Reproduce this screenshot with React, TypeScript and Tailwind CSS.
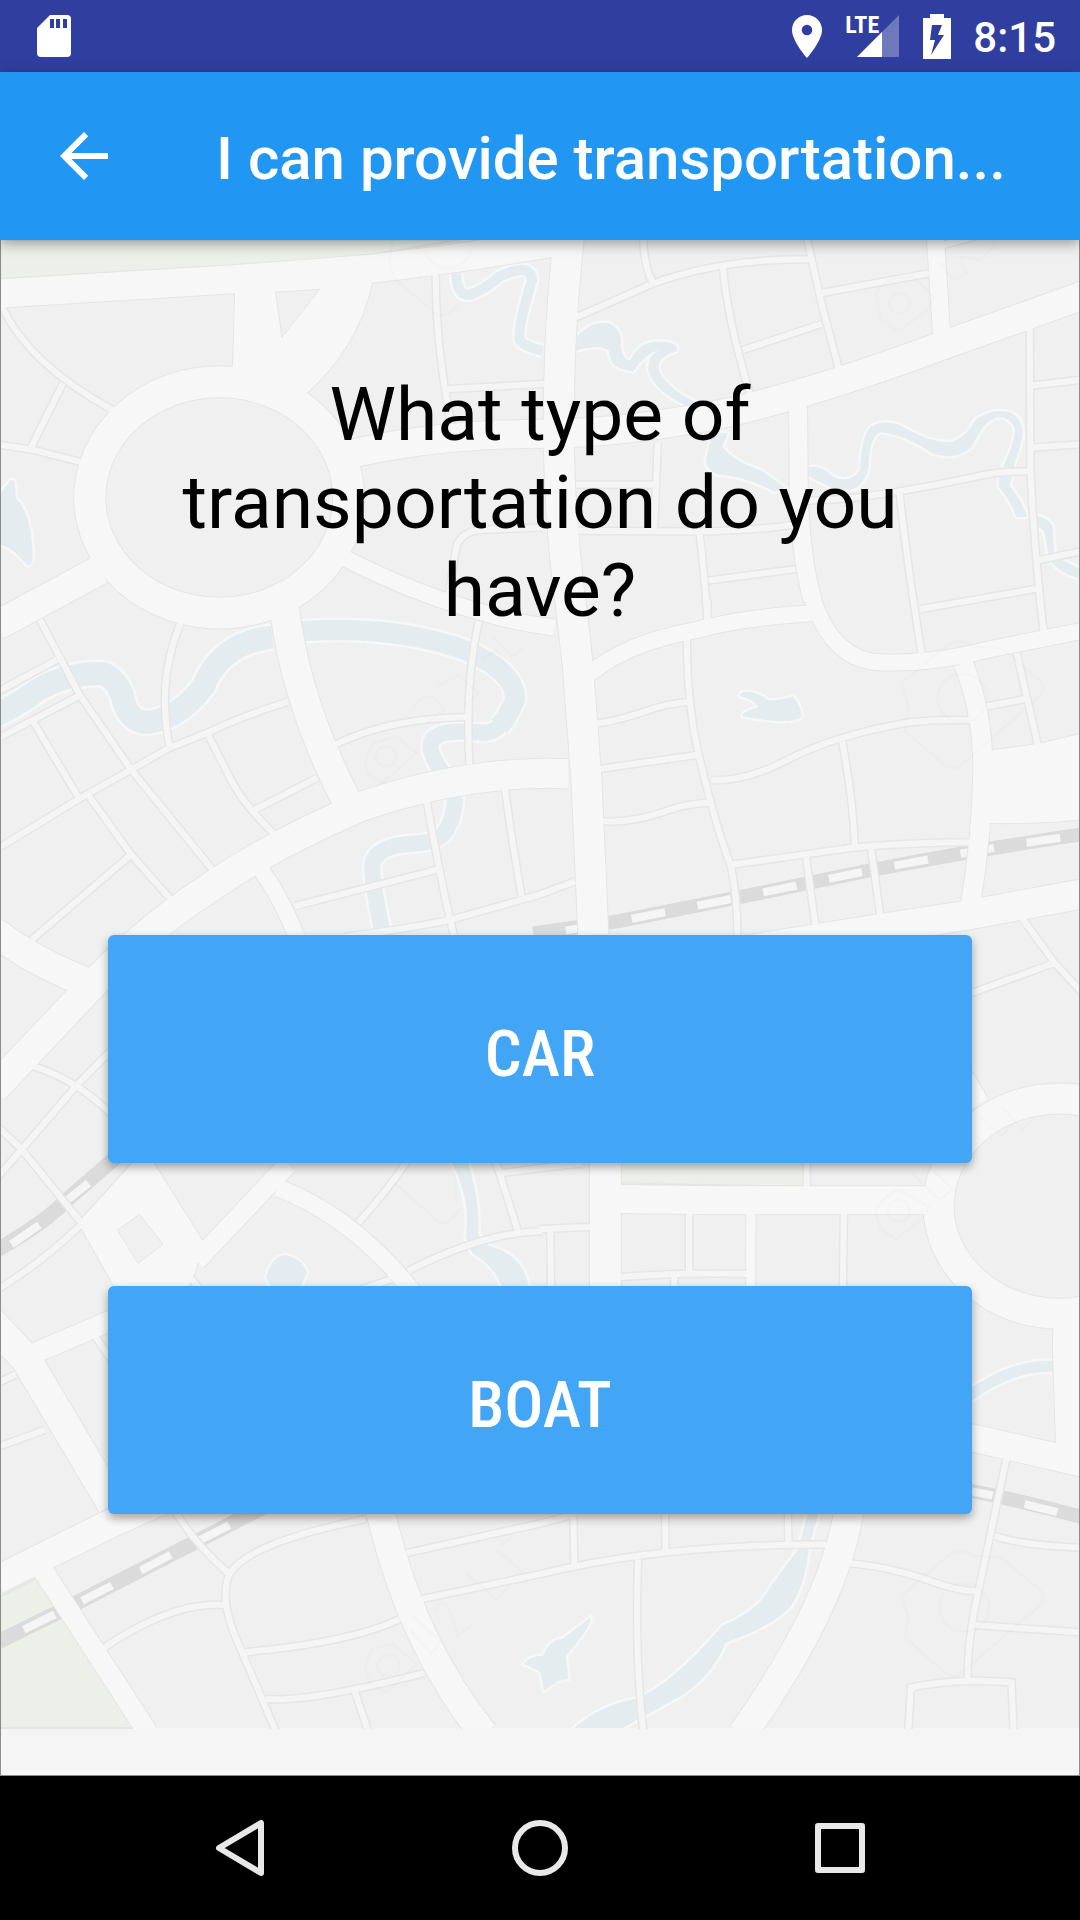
import React from "react";

type Road = [d: string, width: number];

interface District {
  x: number;
  y: number;
  parks?: string[];
  water?: string[];
  rivers?: Road[];
  rails?: { bed: string; ties: string; width: number; dash?: string }[];
  minor?: string[];
  roads?: Road[];
  plazas?: string[];
  islands?: string[];
  marks?: string[];
}

const STREET = 7;

const districts: District[] = [
  {
    x: 0,
    y: 230,
    parks: ["M0 30L0 147L700 105L1070 75L1330 30Z"],
    water: ["M0 790L30 752Q40 745 42 765L45 805Q92 850 94 990Q90 1010 75 1003Q40 955 0 945Z"],
    rivers: [["M1325 130Q1325 195 1360 195Q1400 185 1450 140Q1540 95 1545 150Q1500 300 1510 330Q1520 350 1575 362", 10]],
    minor: [
      "M5 230Q80 400 325 540",
      "M182 460L88 655",
      "M0 645L95 660L235 697",
      "M1265 135Q1265 350 1310 580",
      "M1295 478L1575 462",
      "M1300 1110L1325 950Q1340 905 1400 900L1575 893",
    ],
    roads: [
      ["M-10 191L680 148L1070 117Q1350 85 1620 35", 29],
      ["M1012 803A376 347 0 1 1 260 803A376 347 0 1 1 1012 803Z", 32],
      ["M990 680Q1250 612 1575 612", 29],
      ["M290 1020L-10 1187", 30],
    ],
    plazas: ["M682 150L682 200Q680 310 675 420L800 480L890 490Q1040 350 1080 158L1070 110Z"],
    islands: ["M800 187L928 178L818 322Z"],
    marks: ["M1140 30Q1120 120 1150 150L1270 255Q1300 260 1330 225", "M1230 60Q1260 115 1300 115Q1350 110 1370 60"],
  },
  {
    x: 540,
    y: 230,
    water: [
      "M105 322Q150 270 200 280Q240 300 235 345Q240 390 262 392Q290 335 340 335Q410 335 395 365Q340 380 345 420Q370 480 470 525L420 525Q330 480 315 420Q315 370 350 360Q310 365 270 425L230 415Q200 400 200 362Q170 340 105 362Z",
      "M500 610L545 610L530 650Q560 695 640 720L720 780L680 785Q600 740 520 735Q480 720 482 690Z",
      "M780 712Q820 705 850 740Q900 765 930 720Q935 600 970 585Q1020 565 1070 600Q1150 645 1200 635Q1240 620 1265 570Q1320 530 1370 550Q1410 570 1400 630L1375 715L1345 710Q1380 640 1380 600Q1370 560 1330 562Q1290 570 1255 650Q1210 695 1140 670Q1050 610 990 607Q955 620 955 710Q940 785 880 782Q840 775 780 737Z",
      "M1335 740L1370 740L1365 770Q1400 810 1415 860L1385 862Q1360 800 1332 770Z",
      "M1435 855Q1495 870 1490 905L1495 980L1580 1022L1580 1050Q1500 1030 1480 985L1465 905L1435 880Z",
    ],
    minor: [
      "M105 262L330 160Q530 85 785 88",
      "M300 20Q300 100 328 160",
      "M532 110Q540 250 612 500",
      "M775 20L820 230L868 415",
      "M590 360L818 282",
      "M815 190L1130 130",
      "M1170 45L1270 18",
      "M1423 290L1425 720Q1435 950 1463 1205",
      "M1430 467L1580 449",
      "M1430 653L1580 643",
      "M1440 993L1580 963",
      "M775 812Q950 812 1290 735Q1350 723 1422 725",
      "M1045 790Q1060 950 1108 1270",
      "M1105 1138L1442 1077",
      "M342 640L332 895",
      "M105 765L335 765",
      "M105 903L460 905Q650 900 735 885",
      "M463 905Q480 1050 487 1180",
      "M490 1052L742 1018",
      "M0 462L30 461",
    ],
    roads: [
      ["M85 10Q50 330 55 660Q60 900 88 1110L110 1310L135 1650L155 2115", 31],
      ["M-10 612Q250 612 560 545Q820 480 1160 350L1590 192", 29],
      ["M1148 10L1168 330", 18],
      ["M750 530L752 800Q760 1000 792 1110", 19],
    ],
    marks: ["M975 190Q985 170 1030 145L1085 140L1145 205L1125 240L1040 305L990 270Z", "M1015 220A30 30 0 1 0 1075 220A30 30 0 1 0 1015 220", "M1165 100L1200 150L1240 130L1220 80L1280 90L1325 45"],
  },
  {
    x: 0,
    y: 600,
    rivers: [
      ["M-10 345Q60 310 110 270Q200 218 300 222Q335 235 355 290Q370 370 430 368Q520 355 590 260Q640 130 790 112", 23],
      ["M870 95Q1150 75 1360 155Q1500 220 1495 300Q1475 350 1450 380", 20],
      ["M1450 380Q1425 405 1390 398Q1250 385 1250 440Q1250 470 1285 520", 16],
      ["M1320 570Q1325 650 1290 700Q1270 728 1200 732Q1085 740 1080 800Q1080 850 1110 995", 16],
    ],
    minor: [
      "M115 60L230 285L380 510L620 815",
      "M0 272L165 180",
      "M0 412L235 285",
      "M95 365L225 590",
      "M258 590L380 765L500 905",
      "M0 742L230 597L380 510L490 445L600 400Q700 350 835 306",
      "M525 65Q480 180 478 290Q478 380 492 440",
      "M603 405L670 540Q710 620 798 705",
      "M740 630L920 535",
      "M970 436Q1130 355 1355 352",
      "M1390 65Q1350 250 1363 495",
      "M380 765L92 1020",
      "M1238 600Q1290 900 1320 1015",
      "M855 920L1270 810",
      "M1465 560Q1490 750 1515 890",
      "M1000 1012Q1200 985 1310 960L1568 885L1670 845",
    ],
    roads: [
      ["M820 -20Q850 300 1015 620", 30],
      ["M1000 -125Q1200 -20 1390 35Q1480 65 1610 84", 17],
      ["M1650 522Q1350 512 1050 620Q780 740 600 870Q420 990 245 1180L-20 1470", 30],
      ["M-20 995Q100 1090 260 1152", 30],
      ["M760 815Q820 900 868 1030", 17],
    ],
    marks: ["M1060 480L1085 430L1150 410L1210 460L1110 550L1065 520Z", "M1090 470A30 30 0 1 0 1150 470A30 30 0 1 0 1090 470", "M1200 330Q1210 290 1260 290L1290 330L1240 370", "M1270 260L1330 225L1390 280L1350 320", "M1400 180L1440 150L1480 215", "M1430 110L1490 170L1520 140"],
  },
  {
    x: 540,
    y: 600,
    water: ["M580 288Q580 275 610 277Q635 280 660 300Q685 307 735 290Q765 330 757 355Q720 375 590 350Q580 340 635 322Q620 300 580 288Z"],
    rails: [
      {
        bed: "M-20 1002L230 965L580 893L960 812Q1300 745 1590 702",
        ties: "M75 993L230 965L580 893L960 812Q1300 745 1520 713",
        width: 14,
        dash: "34 33",
      },
    ],
    minor: [
      "M427 115Q425 300 460 460Q510 680 555 800Q575 900 573 1010",
      "M158 372Q200 370 300 337Q380 308 437 308",
      "M172 508L462 465",
      "M182 665Q260 670 350 640Q420 612 502 608",
      "M498 542Q600 545 720 480Q850 410 1050 372Q1130 358 1255 362",
      "M878 425Q910 600 915 745",
      "M560 795L900 745Q1050 730 1250 728",
      "M772 765L800 975",
      "M962 745L988 945",
      "M1298 320L1415 297",
      "M1385 160L1447 438",
      "M487 0L487 70",
      "M1400 955L1495 1090L1590 1195",
      "M1495 1090L1250 1182",
      "M1463 80L1465 100",
    ],
    roads: [
      ["M145 222Q250 130 450 92Q600 50 810 40", 17],
      ["M790 -10Q850 190 1000 188Q1150 192 1300 150L1590 90", 17],
      ["M1230 190Q1285 330 1287 500Q1285 700 1250 920", 20],
      ["M540 1062Q900 1000 1240 947L1590 880", 30],
    ],
    plazas: ["M1270 480L1315 452L1450 432L1590 398L1590 658Q1450 675 1308 670L1270 670Z"],
    marks: ["M1050 250L1180 140Q1215 110 1260 140L1340 145L1450 240Q1475 270 1440 300L1220 500Q1200 515 1170 490L1060 395L1070 320Z", "M1155 295A72 72 0 1 0 1300 295A72 72 0 1 0 1155 295"],
  },
  {
    x: 0,
    y: 960,
    water: [
      "M772 955Q790 888 830 888Q880 900 890 940L870 990L790 990Z",
      "M1305 595L1355 595Q1395 720 1388 825L1420 860Q1530 890 1535 995L1458 995Q1450 930 1370 880L1352 830Q1370 720 1305 595Z",
    ],
    rails: [{ bed: "M-10 872Q130 790 200 715L340 590", ties: "M32 855L113 797M197 720L256 671", width: 15 }],
    minor: [
      "M95 320Q220 360 320 462",
      "M-10 655L62 570L220 380L320 275",
      "M-5 505L62 570L235 790",
      "M-5 988Q120 910 235 795L400 605",
      "M1040 790Q1120 700 1185 600",
      "M1185 935Q1400 820 1575 815",
      "M1438 600L1505 820",
      "M1450 642L1575 625L1690 612",
      "M1135 960L1050 990",
      "M545 945L580 990",
      "M275 1130L325 1205",
      "M-5 1270L45 1245",
    ],
    roads: [
      ["M570 905L835 615", 20],
      ["M805 685Q1000 760 1165 955L1200 1000", 18],
      ["M80 1190L330 1080", 21],
    ],
    plazas: ["M392 605L442 605L590 848L565 942L540 990L335 990L235 805L235 780Z"],
    islands: ["M340 812L405 765L473 855L400 912Z"],
    marks: ["M1145 670L1270 785Q1290 800 1310 780L1340 745", "M1320 620L1325 730"],
  },
  {
    x: 540,
    y: 960,
    parks: ["M235 595L235 672L765 682L765 595Z"],
    rivers: [["M1240 1315Q1380 1210 1500 1222", 11]],
    minor: [
      "M775 600L775 700",
      "M433 755L433 945",
      "M883 755L880 990",
      "M235 953Q450 938 618 945",
      "M390 950L390 990",
      "M-5 810L150 802",
      "M30 812L32 990",
      "M612 945L612 990",
    ],
    roads: [
      ["M180 718Q500 725 1160 722", 29],
      ["M613 755L612 990", 10],
      ["M190 600L190 990", 32],
      ["M1862 740A352 323 0 1 1 1158 740A352 323 0 1 1 1862 740Z", 31],
      ["M1265 440L1190 310", 30],
      ["M1570 430L1620 370", 26],
    ],
    plazas: ["M1492 1080L1490 1160L1500 1480L1600 1500L1600 1080Z"],
    marks: ["M975 760Q985 720 1040 690L1130 740L1120 770L1035 840L990 810Z", "M1010 755A32 32 0 1 0 1074 755A32 32 0 1 0 1010 755", "M1080 640L1160 720L1200 690L1130 620", "M1280 470L1340 530L1380 490", "M1340 440L1400 510L1440 470"],
  },
  {
    x: 0,
    y: 1360,
    parks: ["M0 712L105 658L400 1107L0 1107Z"],
    water: ["M1520 915Q1540 890 1577 890Q1600 840 1633 840L1715 775Q1725 790 1643 890L1650 960L1620 965L1580 995L1570 940Q1540 920 1520 915Z"],
    rails: [
      {
        bed: "M-10 850L190 748L800 425",
        ties: "M68 812L158 766M237 725L325 679M408 634L495 587M580 543L665 498",
        width: 15,
      },
    ],
    minor: [
      "M-5 262L130 212",
      "M510 460Q570 560 665 645",
      "M1060 480Q720 550 665 645Q635 720 690 850L802 1120",
      "M292 872Q500 725 652 738",
      "M705 880Q1020 850 1160 780",
      "M770 1020Q900 1030 1230 942",
      "M1030 998L1070 1120",
      "M1180 582L1568 493L1670 465",
      "M1225 720L1568 645Q1920 555 2400 556",
    ],
    roads: [
      ["M-30 -115L75 0L325 435", 31],
      ["M-10 662L330 488L500 410", 29],
      ["M115 620L428 1120", 21],
      ["M1100 440Q1190 850 1405 1125", 29],
    ],
    marks: ["M1060 920L1080 870L1140 855L1210 915L1120 1000L1070 970Z", "M1095 920A32 32 0 1 0 1159 920A32 32 0 1 0 1095 920", "M1190 810L1250 885L1280 850L1200 770", "M1270 760Q1260 720 1300 740L1330 830L1380 790", "M1350 640L1440 720L1480 680", "M1440 570L1520 640M1450 560L1490 530"],
  },
  {
    x: 540,
    y: 1360,
    water: [
      "M780 455L812 455L782 560Q770 680 730 740Q680 800 540 850Q500 950 410 1010L240 1107L100 1107Q170 1040 280 1018Q380 980 530 800Q640 750 665 690L750 570Z",
    ],
    rails: [{ bed: "M1240 392Q1400 425 1590 478", ties: "M1255 397L1315 409M1408 435L1503 459", width: 14 }],
    minor: [
      "M97 470L100 622",
      "M363 455L365 582",
      "M720 455L722 556",
      "M285 600Q275 900 300 1115",
      "M1070 1115L1078 985Q1220 955 1370 970L1376 1115",
      "M1355 300L1275 690Q1240 850 1243 962",
      "M900 612Q1000 620 1120 660Q1220 700 1275 695",
      "M1320 530Q1400 560 1590 566",
      "M1262 798L1590 821",
    ],
    roads: [
      ["M900 440Q860 730 588 1125", 30],
      ["M1230 230L1590 315", 28],
    ],
    marks: ["M1050 710L1180 595Q1215 560 1260 590L1340 595L1455 695Q1475 720 1440 750L1220 945Q1200 960 1170 935L1060 835L1070 770Z", "M1160 745A72 72 0 1 0 1305 745A72 72 0 1 0 1160 745"],
  },
];

function Layer({ children }: { children: (district: District) => React.ReactNode }) {
  return (
    <>
      {districts.map((district) => (
        <g
          key={`${district.x}-${district.y}`}
          transform={`translate(${district.x} ${district.y}) scale(0.34439 0.33333)`}
        >
          {children(district)}
        </g>
      ))}
    </>
  );
}

function Line({ d, color, width, dash }: { d: string; color: string; width: number; dash?: string }) {
  return (
    <path d={d} fill="none" stroke={color} strokeWidth={width} strokeDasharray={dash} vectorEffect="non-scaling-stroke" />
  );
}

function Area({ d, color, edge, width = 2 }: { d: string; color: string; edge: string; width?: number }) {
  return <path d={d} fill={color} stroke={edge} strokeWidth={width} strokeLinejoin="round" vectorEffect="non-scaling-stroke" />;
}

function CityMap() {
  return (
    <svg
      aria-hidden="true"
      className="absolute inset-0 h-full w-full"
      viewBox="0 240 1080 1536"
      preserveAspectRatio="xMidYMin slice"
    >
      <rect x="0" y="240" width="1080" height="1489" fill="#f0f0f0" />
      <Layer>
        {(t) => (
          <>
            {t.parks?.map((d) => <Area key={d} d={d} color="#edf0e9" edge="#e4e6e0" />)}
            {t.rivers?.map(([d, w]) => <Line key={d} d={d} color="#f6f7f7" width={w + 5} />)}
            {t.water?.map((d) => <Area key={d} d={d} color="#e5ecef" edge="#f6f7f7" width={5} />)}
          </>
        )}
      </Layer>
      <Layer>
        {(t) => (
          <>
            {t.rivers?.map(([d, w]) => <Line key={d} d={d} color="#e5ecef" width={w} />)}
            {t.water?.map((d) => <path key={d} d={d} fill="#e5ecef" />)}
            {t.rails?.map(({ bed, width }) => <Line key={bed} d={bed} color="#dbdbdb" width={width} />)}
            {t.rails?.map(({ ties, dash }) => <Line key={ties} d={ties} color="#f5f5f5" width={8} dash={dash} />)}
          </>
        )}
      </Layer>
      <Layer>
        {(t) => (
          <>
            {t.minor?.map((d) => <Line key={d} d={d} color="#e6e6e6" width={STREET + 2} />)}
            {t.roads?.map(([d, w]) => <Line key={d} d={d} color="#e5e5e5" width={w + 1} />)}
            {t.plazas?.map((d) => <Area key={d} d={d} color="#e5e5e5" edge="#e5e5e5" />)}
          </>
        )}
      </Layer>
      <Layer>
        {(t) => (
          <>
            {t.minor?.map((d) => <Line key={d} d={d} color="#f5f5f5" width={STREET - 1} />)}
          </>
        )}
      </Layer>
      <Layer>
        {(t) => (
          <>
            {t.roads?.map(([d, w]) => <Line key={d} d={d} color="#f7f7f7" width={w - 1} />)}
            {t.plazas?.map((d) => <path key={d} d={d} fill="#f7f7f7" />)}
          </>
        )}
      </Layer>
      <Layer>
        {(t) => (
          <>
            {t.islands?.map((d) => <Area key={d} d={d} color="#f0f0f0" edge="#e6e6e6" width={1} />)}
            {t.marks?.map((d) => <Line key={d} d={d} color="#00000003" width={3} />)}
          </>
        )}
      </Layer>
      <rect x="0" y="1730" width="1080" height="400" fill="#f5f5f5" />
    </svg>
  );
}

function StatusBar() {
  return (
    <div className="flex h-[72px] items-center bg-[#303f9f] pl-9 pr-6 text-white">
      <svg className="h-11 w-9" viewBox="0 0 36 44" fill="currentColor" aria-label="SD card" role="img">
        <path
          fillRule="evenodd"
          d="M14 1h17a4 4 0 0 1 4 4v34a4 4 0 0 1-4 4H5a4 4 0 0 1-4-4V14zM14 5v9h4V5zM20 5v9h4V5zM27 5v9h4V5z"
        />
      </svg>
      <div className="ml-auto flex items-center">
        <svg className="h-11 w-8" viewBox="0 0 32 44" fill="currentColor" aria-label="Location" role="img">
          <path
            fillRule="evenodd"
            d="M16 1C7.700 1 1 7.700 1 16c0 11.200 15 28 15 28s15-16.800 15-28C31 7.700 24.300 1 16 1zm0 20.300a5.300 5.300 0 1 1 0-10.600 5.300 5.300 0 0 1 0 10.600z"
          />
        </svg>
        <div className="relative ml-[22px] h-11 w-14">
          <svg className="h-11 w-14" viewBox="0 0 56 44" fill="currentColor" aria-hidden="true">
            <path d="M54 1v42H12z" opacity="0.3" />
            <path d="M37 18v25H12z" />
          </svg>
          <span className="absolute left-0 top-0 font-['Roboto_Condensed','Roboto'] text-[24px] font-bold leading-[22px]">
            LTE
          </span>
        </div>
        <svg className="ml-[22px] h-[46px] w-7" viewBox="0 0 28 46" fill="currentColor" aria-label="Battery charging" role="img">
          <path fillRule="evenodd" d="M7 1h14v4h7v41H0V5h7zM9 12L7 27h5L8 42 21 22h-6l4-10z" />
        </svg>
        <time className="ml-[22px] pt-1 text-[42px] font-medium leading-[48px]">8:15</time>
      </div>
    </div>
  );
}

function AppBar() {
  return (
    <header className="relative z-10 flex h-[168px] items-center bg-[#2196f3] pl-12 text-white shadow-[0_4px_12px_rgba(0,0,0,0.35)]">
      <button type="button" aria-label="Back" className="size-[72px]">
        <svg className="size-[72px]" viewBox="0 0 24 24" fill="currentColor" aria-hidden="true">
          <path d="M20 11H7.830l5.590-5.590L12 4l-8 8 8 8 1.410-1.410L7.830 13H20v-2z" />
        </svg>
      </button>
      <h1 className="ml-24 whitespace-nowrap pt-1.5 text-[60px] font-medium leading-[72px]">I can provide transportation...</h1>
    </header>
  );
}

function Choice({ label }: { label: string }) {
  return (
    <button
      type="button"
      className="h-[228px] w-full rounded-md bg-[#42a5f5] pt-2.5 font-['Roboto_Condensed','Roboto'] text-[65px] font-medium leading-[72px] text-white shadow-[0_4px_10px_rgba(0,0,0,0.35)]"
    >
      {label}
    </button>
  );
}

function NavBar() {
  return (
    <nav className="grid h-36 grid-cols-3 items-center justify-items-center bg-black px-[90px] text-[#e8e8e8]">
      <button type="button" aria-label="Back">
        <svg className="size-[60px]" viewBox="0 0 60 60" fill="none" stroke="currentColor" strokeWidth="6" strokeLinejoin="round" aria-hidden="true">
          <path d="M51 5v50L9 30z" />
        </svg>
      </button>
      <button type="button" aria-label="Home">
        <svg className="size-[60px]" viewBox="0 0 60 60" fill="none" stroke="currentColor" strokeWidth="6" aria-hidden="true">
          <circle cx="30" cy="30" r="25" />
        </svg>
      </button>
      <button type="button" aria-label="Recent apps">
        <svg className="size-[60px]" viewBox="0 0 60 60" fill="none" stroke="currentColor" strokeWidth="6" strokeLinejoin="round" aria-hidden="true">
          <path d="M8 8h44v44H8z" />
        </svg>
      </button>
    </nav>
  );
}

export default function App() {
  return (
    <div className="flex min-h-screen flex-col bg-[#f5f5f5] font-['Roboto',sans-serif]">
      <StatusBar />
      <AppBar />
      <main className="relative flex-1 overflow-hidden border-x border-b border-[#8c8c8c]">
        <CityMap />
        <div className="relative px-[107px] pb-20 pt-[130px]">
          <h2 className="text-center text-[75px] leading-[88px] text-black">What type of transportation do you have?</h2>
          <div className="mt-[301px] flex flex-col gap-[123px]">
            <Choice label="CAR" />
            <Choice label="BOAT" />
          </div>
        </div>
      </main>
      <NavBar />
    </div>
  );
}
